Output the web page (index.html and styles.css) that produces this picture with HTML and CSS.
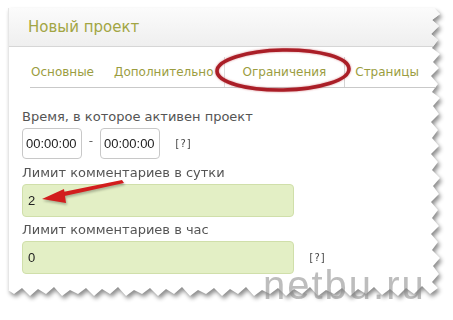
FILE: index.html
```html
<!DOCTYPE html>
<html lang="ru">
  <head>
    <meta charset="UTF-8">
    <meta name="viewport" content="width=device-width, initial-scale=1.0">
    <title>Новый проект</title>
    <link rel="stylesheet" href="styles.css">
  </head>
  <body>
    <div class="stage">
      <div class="sheet">
        <div class="panel">
          <div class="panel-head">Новый проект</div>
          <ul class="tabs">
            <li class="tab">Основные</li>
            <li class="tab">Дополнительно</li>
            <li class="tab active">Ограничения</li>
            <li class="tab">Страницы</li>
          </ul>
          <div class="form">
            <label class="field-label">Время, в которое активен проект</label>
            <div class="time-row">
              <input class="time" type="text" value="00:00:00">
              <span class="dash">-</span>
              <input class="time" type="text" value="00:00:00">
              <span class="help">[?]</span>
            </div>
            <label class="field-label">Лимит комментариев в сутки</label>
            <div class="row">
              <input class="field" type="text" value="2">
            </div>
            <label class="field-label">Лимит комментариев в час</label>
            <div class="row">
              <input class="field" type="text" value="0">
              <span class="help">[?]</span>
            </div>
          </div>
        </div>
      </div>

      <svg class="ring" width="146" height="52" viewBox="0 0 146 52">
        <ellipse cx="73" cy="26" rx="66" ry="20" transform="rotate(-1 73 26)" fill="none" stroke="#aa1e27" stroke-width="3.6"/>
      </svg>

      <svg class="arrow" width="90" height="30" viewBox="0 0 90 30">
        <polygon points="84,2 86,5 22,19 20,15" fill="#d21d1d"/>
        <polygon points="4,21 26,11 28,25" fill="#d21d1d"/>
      </svg>

      <div class="watermark">netbu.ru</div>
    </div>
  </body>
</html>
```

FILE: styles.css
```css
body{
  margin: 0;
  background-color: #fff;
  font-family: 'DejaVu Sans', Verdana, sans-serif;
}
.stage{
  position: relative;
  width: 453px;
  height: 320px;
  overflow: hidden;
  padding: 8px 0 0 8px;
  box-sizing: border-box;
}
.sheet{
  filter: drop-shadow(2px 3px 2px rgba(0, 0, 0, 0.45));
}
.panel{
  width: 432px;
  height: 292px;
  background-color: #fff;
  border-left: 1px solid #e6e6e6;
  box-sizing: border-box;
  clip-path: polygon(0 0, 426px 0, 432px 6px, 424px 12px, 431px 18px, 423px 26px, 430px 32px, 424px 40px, 432px 46px, 425px 54px, 431px 60px, 423px 68px, 430px 76px, 424px 84px, 432px 90px, 425px 98px, 431px 106px, 423px 114px, 430px 122px, 424px 130px, 431px 138px, 423px 146px, 430px 154px, 424px 162px, 432px 170px, 425px 178px, 431px 186px, 423px 194px, 430px 202px, 424px 210px, 431px 218px, 423px 226px, 430px 234px, 424px 242px, 432px 250px, 425px 258px, 431px 266px, 424px 274px, 430px 280px, 422px 286px, 414px 278px, 406px 286px, 398px 280px, 390px 288px, 382px 281px, 374px 287px, 366px 279px, 358px 286px, 350px 281px, 342px 288px, 334px 280px, 326px 286px, 318px 282px, 310px 288px, 302px 279px, 294px 286px, 286px 281px, 278px 288px, 270px 280px, 262px 286px, 254px 282px, 246px 288px, 238px 279px, 230px 286px, 222px 281px, 214px 288px, 206px 280px, 198px 286px, 190px 282px, 182px 288px, 174px 279px, 166px 286px, 158px 281px, 150px 288px, 142px 280px, 134px 286px, 126px 282px, 118px 288px, 110px 279px, 102px 286px, 94px 281px, 86px 288px, 78px 280px, 70px 286px, 62px 282px, 54px 288px, 46px 279px, 38px 286px, 30px 281px, 22px 288px, 14px 280px, 6px 286px, 0 282px);
}
.panel-head{
  height: 38px;
  line-height: 38px;
  padding-left: 19px;
  font-family: 'DejaVu Sans', sans-serif;
  font-size: 15px;
  color: #a2a543;
  background: linear-gradient(#fbfbfb, #efefef);
  border-bottom: 1px solid #d6d6d6;
}
.tabs{
  display: flex;
  align-items: flex-end;
  list-style: none;
  margin: 0 0 0 21px;
  padding: 0;
  height: 40px;
  border-bottom: 1px solid #c9c9c9;
}
.tab{
  height: 30px;
  line-height: 30px;
  padding: 0 10px;
  font-size: 12px;
  color: #9b9d3f;
}
.tab:first-child{
  padding-left: 1px;
}
.tab.active{
  padding: 0 18px 0 18px;
  border-left: 1px solid #dddddd;
  border-right: 1px solid #d4d4d4;
  background-color: #fff;
}
.form{
  padding: 20px 0 0 13px;
  display: flex;
  flex-direction: column;
}
.field-label{
  font-size: 13px;
  line-height: 17px;
  color: #555;
  margin-bottom: 3px;
}
.time-row{
  display: flex;
  align-items: center;
  margin-bottom: 5px;
}
.time{
  width: 60px;
  height: 31px;
  box-sizing: border-box;
  border: 1px solid #c8c8c8;
  border-radius: 4px;
  padding: 0 0 0 3px;
  font-family: 'Liberation Sans', Arial, sans-serif;
  font-size: 13px;
  color: #222;
  background-color: #fff;
}
.dash{
  width: 18px;
  text-align: center;
  align-self: flex-start;
  padding-top: 6px;
  font-size: 12px;
  color: #666;
}
.help{
  margin-left: 14px;
  font-family: 'DejaVu Sans Mono', monospace;
  font-size: 10px;
  color: #444;
}
.row{
  display: flex;
  align-items: center;
  margin-bottom: 4px;
}
.field{
  width: 272px;
  height: 33px;
  box-sizing: border-box;
  border: 1px solid #d0dfaa;
  border-radius: 4px;
  padding: 0 0 0 5px;
  font-family: 'Liberation Sans', Arial, sans-serif;
  font-size: 13px;
  color: #222;
  background-color: #e3efc5;
}
.ring{
  position: absolute;
  left: 210px;
  top: 44px;
  filter: drop-shadow(0 0 1px rgba(180, 30, 40, 0.5));
}
.arrow{
  position: absolute;
  left: 38px;
  top: 178px;
  filter: drop-shadow(1px 2px 1px rgba(0, 0, 0, 0.25));
}
.watermark{
  position: absolute;
  left: 263px;
  top: 265px;
  font-family: 'Liberation Sans', Arial, sans-serif;
  font-size: 40px;
  line-height: 40px;
  color: rgba(135, 135, 135, 0.55);
  letter-spacing: 2px;
}
```
